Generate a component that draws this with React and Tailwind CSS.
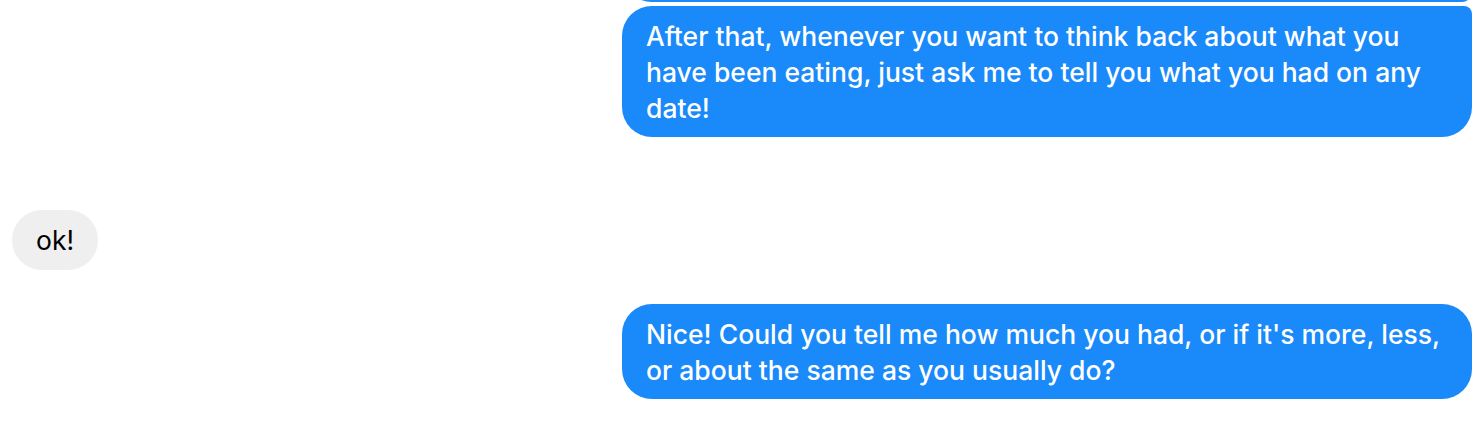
export default function App() {
  return (
    <div className="h-[440px] overflow-hidden bg-white px-3 font-['Inter',sans-serif] text-[26.5px] font-medium leading-[36px]">
      {/* previous message, only its bottom edge is visible */}
      <div className="flex justify-end">
        <div className="-mt-[58px] h-[60px] w-[850px] rounded-[30px] rounded-br-[10px] bg-[#1a89fa]" />
      </div>

      <div className="mt-1 flex justify-end">
        <div className="max-w-[850px] rounded-[30px] rounded-tr-[8px] bg-[#1a89fa] px-6 py-[11.5px] text-white">
          After that, whenever you want to think back about what you have been eating, just ask me to tell you what you had on any date!
        </div>
      </div>

      <div className="mt-[73px] flex justify-start">
        <div className="rounded-[30px] bg-[#efefef] px-6 py-3 font-normal text-black">ok!</div>
      </div>

      <div className="mt-[34px] flex justify-end">
        <div className="max-w-[850px] rounded-[30px] bg-[#1a89fa] px-6 py-[11.5px] text-white">
          Nice! Could you tell me how much you had, or if it's more, less, or about the same as you usually do?
        </div>
      </div>
    </div>
  );
}
